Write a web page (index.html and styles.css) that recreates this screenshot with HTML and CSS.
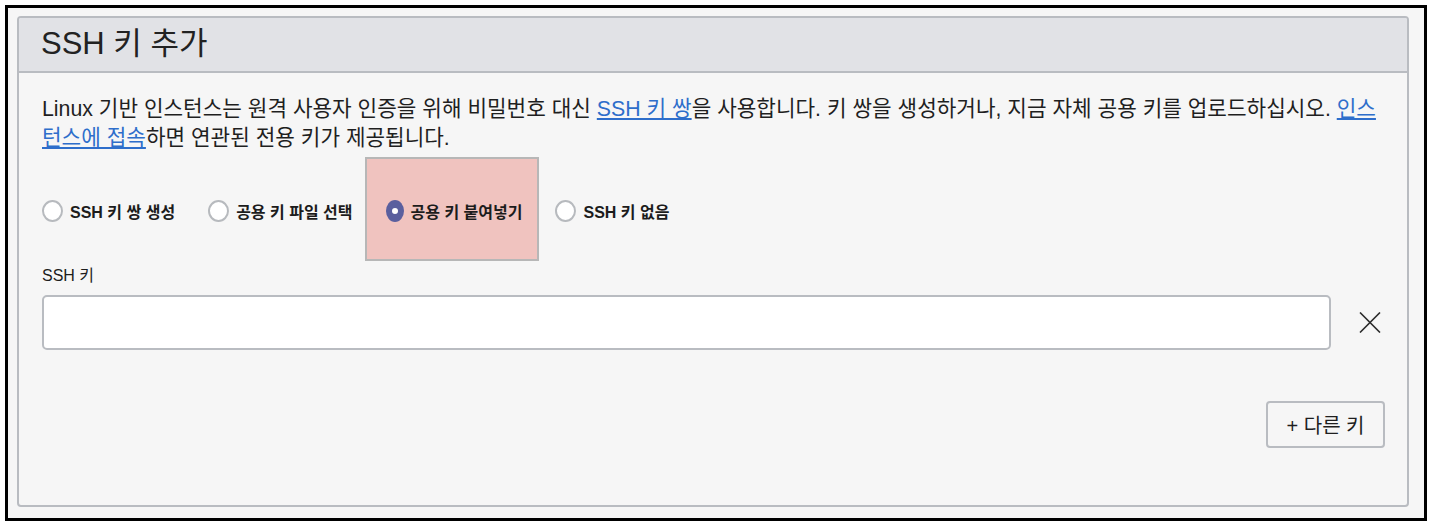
FILE: index.html
```html
<!DOCTYPE html>
<html lang="ko">
<head>
<meta charset="utf-8">
<link rel="stylesheet" href="styles.css">
</head>
<body>
<div class="frame">
  <section class="panel">
    <header class="panel-head">
      <h2 class="title">SSH 키 추가</h2>
    </header>
    <div class="panel-body">
      <p class="intro">Linux 기반 인스턴스는 원격 사용자 인증을 위해 비밀번호 대신 <a href="#" class="link">SSH 키 쌍</a>을 사용합니다. 키 쌍을 생성하거나, 지금 자체 공용 키를 업로드하십시오. <a href="#" class="link">인스턴스에 접속</a>하면 연관된 전용 키가 제공됩니다.</p>

      <div class="radios">
        <label class="radio"><span class="dot"></span><span class="radio-text">SSH 키 쌍 생성</span></label>
        <label class="radio"><span class="dot"></span><span class="radio-text">공용 키 파일 선택</span></label>
        <label class="radio radio-hl"><span class="dot dot-on"></span><span class="radio-text">공용 키 붙여넣기</span></label>
        <label class="radio"><span class="dot"></span><span class="radio-text">SSH 키 없음</span></label>
      </div>

      <div class="field-label">SSH 키</div>
      <div class="field-row">
        <div class="input"></div>
        <button class="clear" type="button" aria-label="remove">
          <svg width="22" height="21" viewBox="0 0 22 21"><path d="M1 0.5 L21 20.5 M21 0.5 L1 20.5" stroke="#2b2b2b" stroke-width="1.6" fill="none"/></svg>
        </button>
      </div>

      <div class="actions">
        <button class="btn" type="button">+ 다른 키</button>
      </div>
    </div>
  </section>
</div>
</body>
</html>
```
FILE: styles.css
```css
* { box-sizing: border-box; }
html, body { margin: 0; padding: 0; background: #ffffff; }
body {
  font-family: "Liberation Sans", "Noto Sans CJK KR", sans-serif;
  color: #1d1d1d;
  padding: 5px 0 0 5px;
}
.frame {
  width: 1422px;
  height: 516px;
  border: 3px solid #000;
  background: #f6f6f6;
  padding: 8px 15px 11px 9px;
  display: flex;
}
.panel {
  flex: 1;
  border: 2px solid #b9bcc1;
  border-radius: 4px;
  background: #f6f6f6;
  display: flex;
  flex-direction: column;
  overflow: hidden;
}
.panel-head {
  background: #e1e2e6;
  border-bottom: 2px solid #b9bcc1;
  padding: 8px 22px 9px;
}
.title {
  margin: 0;
  font-size: 31px;
  line-height: 36px;
  font-weight: 400;
  color: #222;
}
.panel-body {
  padding: 22px 22px 0 23px;
  display: flex;
  flex-direction: column;
}
.intro {
  margin: 0;
  font-size: 21.3px;
  line-height: 29px;
  color: #1f1f1f;
}
.link { color: #2e6ecb; text-decoration: underline; }
.radios {
  display: flex;
  align-items: center;
  gap: 33px;
  margin-top: 46px;
  height: 23px;
}
.radio {
  position: relative;
  display: flex;
  align-items: center;
  gap: 7px;
  font-size: 16px;
  font-weight: 700;
  color: #1c1c1c;
}
.radio-text { position: relative; }
.radio-hl::before {
  content: "";
  position: absolute;
  left: -21px;
  right: -17px;
  top: -42px;
  bottom: -38px;
  background: #f0c3bf;
  border: 2px solid #b7b7b7;
}
.dot {
  position: relative;
  width: 21px;
  height: 22px;
  border-radius: 50%;
  border: 2px solid #b7babe;
  background: #fff;
  flex: none;
}
.dot-on {
  width: 18px;
  border: none;
  background: #5a5f9e;
}
.dot-on::after {
  content: "";
  position: absolute;
  left: 6px;
  top: 8px;
  width: 6px;
  height: 6px;
  border-radius: 50%;
  background: #fff;
}
.field-label {
  margin-top: 44px;
  font-size: 16px;
  line-height: 20px;
}
.field-row {
  margin-top: 9px;
  display: flex;
  align-items: center;
  gap: 28px;
}
.input {
  flex: 1;
  height: 55px;
  background: #fff;
  border: 2px solid #b9bcc1;
  border-radius: 5px;
}
.clear {
  border: 0;
  background: none;
  padding: 0;
  margin-right: 4px;
  width: 22px;
  height: 21px;
  display: flex;
}
.actions {
  display: flex;
  justify-content: flex-end;
  margin-top: 51px;
}
.btn {
  height: 47px;
  width: 119px;
  border: 2px solid #b9bcc1;
  border-radius: 4px;
  background: #f6f6f6;
  font-family: "Liberation Sans", "Noto Sans CJK KR", sans-serif;
  font-size: 20px;
  color: #1f1f1f;
}
```
